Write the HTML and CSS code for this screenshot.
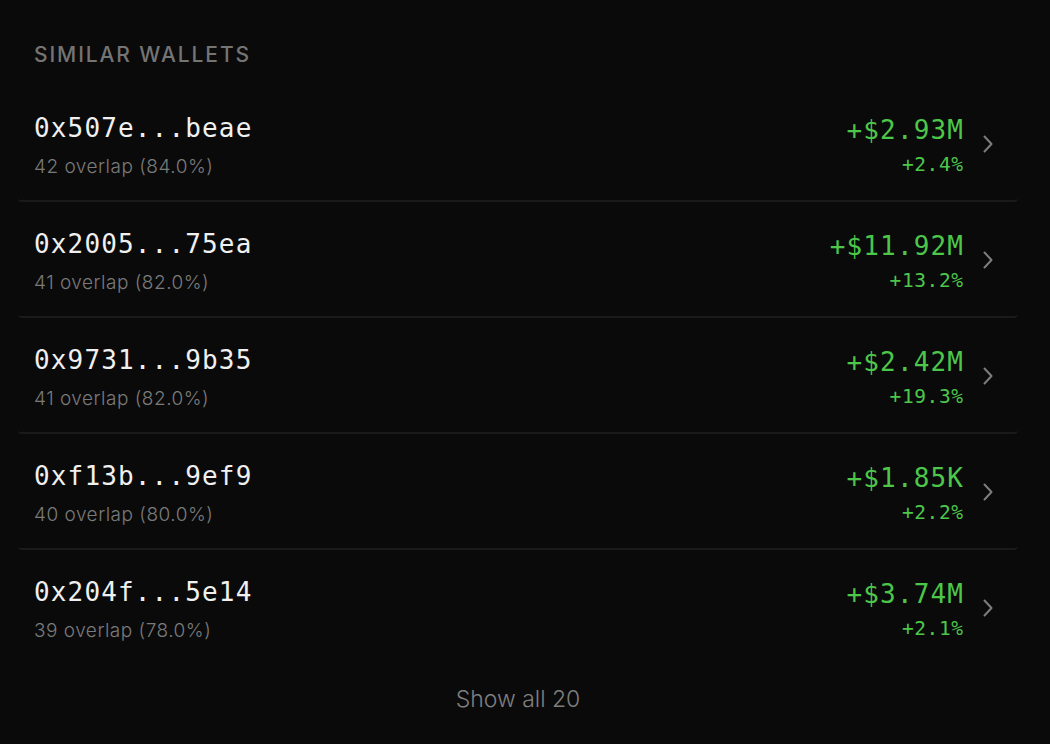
FILE: index.html
```html
<!DOCTYPE html>
<html>
<head>
<meta charset="utf-8">
<link rel="stylesheet" href="styles.css">
</head>
<body>
<section class="panel">
  <h2 class="title">SIMILAR WALLETS</h2>
  <ul class="list">
    <li class="row">
      <div class="left">
        <div class="addr">0x507e...beae</div>
        <div class="overlap">42 overlap (84.0%)</div>
      </div>
      <div class="right">
        <div class="pnl">+$2.93M</div>
        <div class="pct">+2.4%</div>
      </div>
      <svg class="chev" width="10" height="18" viewBox="0 0 10 18"><path d="M1.5 1.5 L8.5 9 L1.5 16.5" fill="none" stroke="#7d7d7d" stroke-width="2" stroke-linecap="round" stroke-linejoin="round"/></svg>
    </li>
    <li class="row">
      <div class="left">
        <div class="addr">0x2005...75ea</div>
        <div class="overlap">41 overlap (82.0%)</div>
      </div>
      <div class="right">
        <div class="pnl">+$11.92M</div>
        <div class="pct">+13.2%</div>
      </div>
      <svg class="chev" width="10" height="18" viewBox="0 0 10 18"><path d="M1.5 1.5 L8.5 9 L1.5 16.5" fill="none" stroke="#7d7d7d" stroke-width="2" stroke-linecap="round" stroke-linejoin="round"/></svg>
    </li>
    <li class="row">
      <div class="left">
        <div class="addr">0x9731...9b35</div>
        <div class="overlap">41 overlap (82.0%)</div>
      </div>
      <div class="right">
        <div class="pnl">+$2.42M</div>
        <div class="pct">+19.3%</div>
      </div>
      <svg class="chev" width="10" height="18" viewBox="0 0 10 18"><path d="M1.5 1.5 L8.5 9 L1.5 16.5" fill="none" stroke="#7d7d7d" stroke-width="2" stroke-linecap="round" stroke-linejoin="round"/></svg>
    </li>
    <li class="row">
      <div class="left">
        <div class="addr">0xf13b...9ef9</div>
        <div class="overlap">40 overlap (80.0%)</div>
      </div>
      <div class="right">
        <div class="pnl">+$1.85K</div>
        <div class="pct">+2.2%</div>
      </div>
      <svg class="chev" width="10" height="18" viewBox="0 0 10 18"><path d="M1.5 1.5 L8.5 9 L1.5 16.5" fill="none" stroke="#7d7d7d" stroke-width="2" stroke-linecap="round" stroke-linejoin="round"/></svg>
    </li>
    <li class="row last">
      <div class="left">
        <div class="addr">0x204f...5e14</div>
        <div class="overlap">39 overlap (78.0%)</div>
      </div>
      <div class="right">
        <div class="pnl">+$3.74M</div>
        <div class="pct">+2.1%</div>
      </div>
      <svg class="chev" width="10" height="18" viewBox="0 0 10 18"><path d="M1.5 1.5 L8.5 9 L1.5 16.5" fill="none" stroke="#7d7d7d" stroke-width="2" stroke-linecap="round" stroke-linejoin="round"/></svg>
    </li>
  </ul>
  <div class="more">Show all 20</div>
</section>
</body>
</html>
```
FILE: styles.css
```css
html, body {
  margin: 0;
  padding: 0;
  background: #0a0a0a;
  height: 100%;
}
body {
  font-family: Inter, "Noto Sans", sans-serif;
}
.panel {
  padding: 39px 32px 0 18px;
}
.title {
  margin: 0 0 15px 16px;
  font-size: 21px;
  font-weight: 500;
  line-height: 32px;
  letter-spacing: 1.9px;
  color: #747474;
}
.list {
  list-style: none;
  margin: 0;
  padding: 0;
}
.row {
  display: flex;
  align-items: center;
  height: 116px;
  box-sizing: border-box;
  padding: 0 25px 0 16px;
  border-bottom: 2px solid #1a1a1a;
  border-radius: 0 0 4px 4px;
}
.row.last {
  border-bottom-color: transparent;
}
.left {
  flex: 1;
  display: flex;
  flex-direction: column;
  gap: 9px;
  margin-top: 5px;
}
.addr {
  font-family: "DejaVu Sans Mono", monospace;
  font-size: 26px;
  letter-spacing: 1.15px;
  line-height: 34px;
  color: #f0f0f0;
}
.overlap {
  font-size: 19px;
  font-weight: 300;
  letter-spacing: 0.5px;
  line-height: 26px;
  color: #7a7a7a;
}
.right {
  display: flex;
  flex-direction: column;
  align-items: flex-end;
  gap: 5px;
  margin-top: 5px;
}
.pnl {
  font-family: "DejaVu Sans Mono", monospace;
  font-size: 26px;
  letter-spacing: 1.15px;
  margin-right: -1.15px;
  line-height: 34px;
  color: #4cc74a;
}
.pct {
  font-family: "DejaVu Sans Mono", monospace;
  font-size: 19.5px;
  letter-spacing: 0.6px;
  margin-right: -0.6px;
  line-height: 26px;
  color: #4cc74a;
}
.chev {
  margin: 2px 0 0 20px;
  flex: none;
}
.more {
  text-align: center;
  margin: 19px 0 0 0;
  font-size: 23px;
  font-weight: 300;
  line-height: 28px;
  color: #7f7f7f;
}
```
